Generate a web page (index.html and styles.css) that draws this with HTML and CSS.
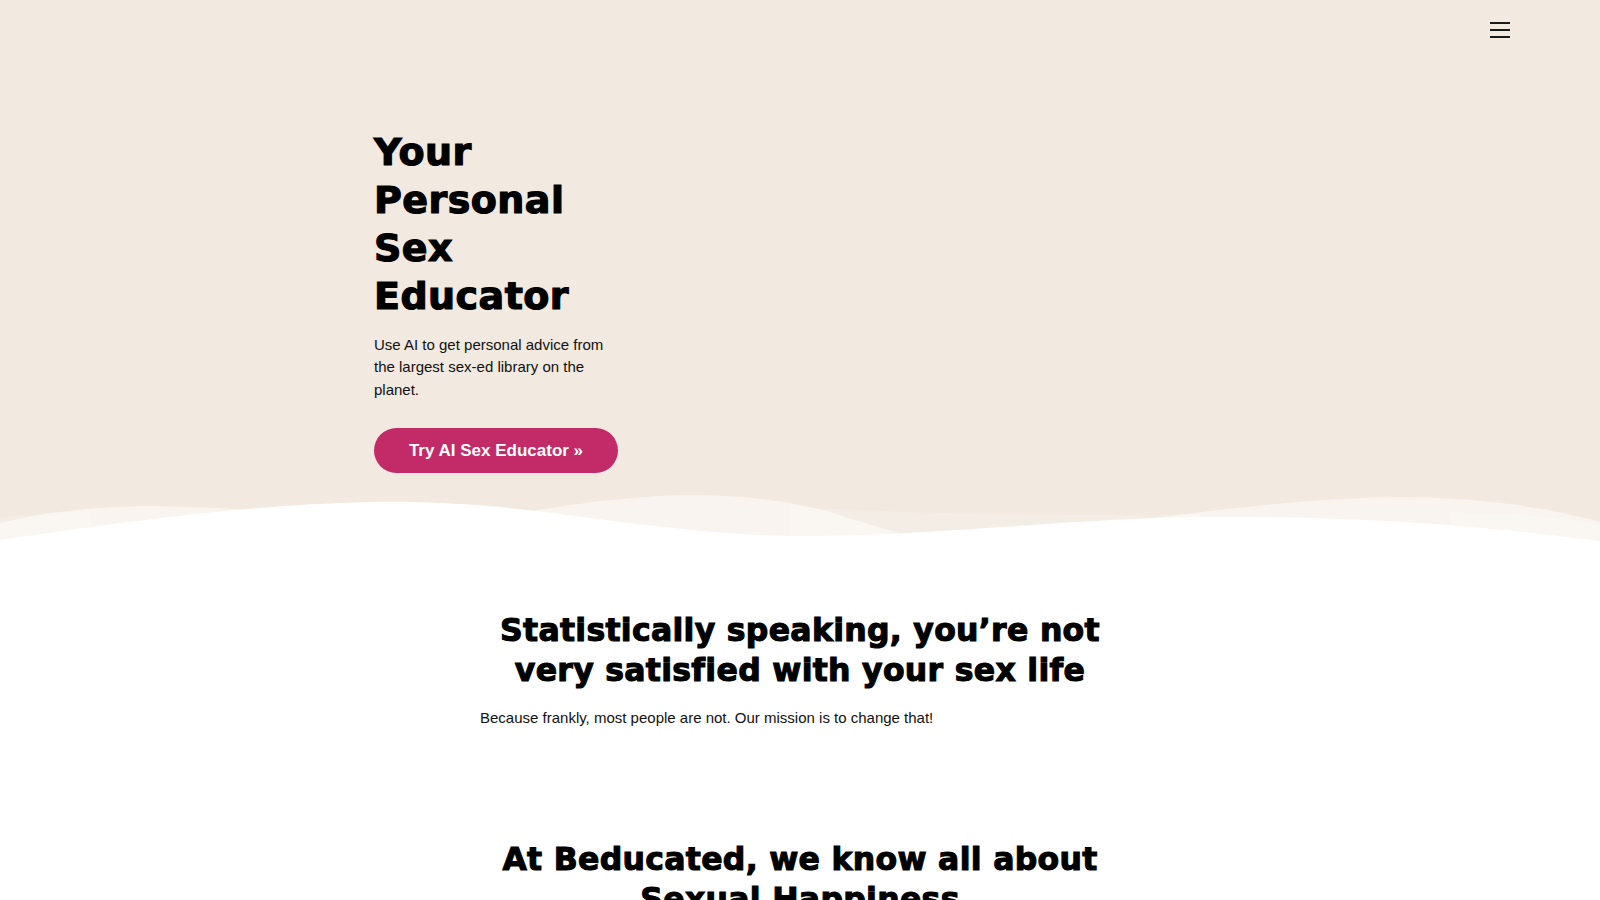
FILE: index.html
```html
<!DOCTYPE html>
<html lang="en">
<head>
<meta charset="utf-8">
<title>Beducated – Your Personal Sex Educator</title>
<link rel="stylesheet" href="styles.css">
</head>
<body>
<section class="hero">
  <header class="topbar">
    <button class="menu" aria-label="Menu">
      <span class="menu-line"></span>
      <span class="menu-line"></span>
      <span class="menu-line"></span>
    </button>
  </header>
  <div class="hero-content">
    <h1 class="hero-title">Your Personal Sex Educator</h1>
    <p class="hero-text">Use AI to get personal advice from the largest sex-ed library on the planet.</p>
    <a class="btn" href="#">Try AI Sex Educator »</a>
  </div>
  <svg class="hero-wave" viewBox="0 485 1600 61" preserveAspectRatio="none" aria-hidden="true">
    <path class="wave-soft" d="M0,523 C40,513 90,507 140,506 C190,506 240,509 280,512 C330,515 380,516 420,520 L420,546 L0,546 Z"/>
    <path class="wave-faint" d="M0,517 C30,514 60,512 90,511 L90,546 L0,546 Z"/>
    <path class="wave-soft" d="M480,520 C560,505 640,494 700,495 C760,496 800,504 830,512 C850,518 870,525 900,533 L900,546 L480,546 Z"/>
    <path class="wave-faint" d="M790,506 C900,514 1050,516 1200,514 L1200,546 L790,546 Z"/>
    <path class="wave-soft" d="M1100,525 C1200,512 1300,498 1400,497 C1480,497 1550,508 1600,522 L1600,546 L1100,546 Z"/>
    <path class="wave-faint" d="M1450,512 C1520,514 1570,518 1600,524 L1600,546 L1450,546 Z"/>
    <path class="wave-solid" d="M0,540 C110,524 240,505 370,502 C440,501 500,506 560,514 C650,526 730,536 800,536 C930,536 1080,518 1200,517 C1380,516 1500,528 1600,541 L1600,546 L0,546 Z"/>
  </svg>
</section>

<section class="intro">
  <h2 class="section-title">Statistically speaking, you’re not very satisfied with your sex life</h2>
  <p class="section-text">Because frankly, most people are not. Our mission is to change that!</p>
</section>

<section class="about">
  <h2 class="section-title">At Beducated, we know all about Sexual Happiness</h2>
</section>
</body>
</html>
```

FILE: styles.css
```css
* {
  box-sizing: border-box;
}

html, body {
  margin: 0;
  padding: 0;
  background: #ffffff;
}

body {
  font-family: "Liberation Sans", Arial, Helvetica, sans-serif;
  color: #111111;
  overflow: hidden;
}

.hero {
  position: relative;
  height: 546px;
  background: #f2e9e0;
}

.topbar {
  display: flex;
  justify-content: flex-end;
  align-items: center;
  height: 60px;
  padding-right: 90px;
}

.menu {
  display: flex;
  flex-direction: column;
  justify-content: space-between;
  width: 20px;
  height: 16px;
  padding: 0;
  border: 0;
  background: transparent;
  cursor: pointer;
}

.menu-line {
  display: block;
  height: 2px;
  width: 100%;
  background: #1a1a1a;
}

.hero-content {
  display: flex;
  flex-direction: column;
  align-items: flex-start;
  width: 245px;
  margin-left: 374px;
  margin-top: 68px;
}

.hero-title {
  margin: 0;
  font-family: "DejaVu Sans", "Liberation Sans", sans-serif;
  font-weight: 700;
  font-size: 38px;
  line-height: 48px;
  letter-spacing: 0.45px;
  color: #000000;
  -webkit-text-stroke: 1.2px #000000;
}

.hero-text {
  margin: 13.5px 0 0;
  font-size: 15px;
  line-height: 22.5px;
  color: #111111;
}

.btn {
  display: flex;
  align-items: center;
  justify-content: center;
  width: 244px;
  height: 45px;
  margin-top: 27px;
  border-radius: 23px;
  background: #c22a68;
  color: #ffffff;
  font-weight: 700;
  font-size: 17px;
  text-decoration: none;
}

.hero-wave {
  position: absolute;
  left: 0;
  bottom: 0;
  width: 100%;
  height: 61px;
  display: block;
}

.wave-soft {
  fill: #ffffff;
  opacity: 0.5;
}

.wave-faint {
  fill: #ffffff;
  opacity: 0.18;
}

.wave-solid {
  fill: #ffffff;
}

.intro {
  width: 640px;
  margin: 0 auto;
  padding-top: 64px;
}

.section-title {
  margin: 0;
  font-family: "DejaVu Sans", "Liberation Sans", sans-serif;
  font-weight: 700;
  font-size: 31.5px;
  line-height: 40px;
  letter-spacing: 0.3px;
  text-align: center;
  color: #000000;
  -webkit-text-stroke: 1.1px #000000;
}

.section-text {
  margin: 17px 0 0;
  font-size: 15px;
  line-height: 22.5px;
  color: #111111;
}

.about {
  width: 640px;
  margin: 0 auto;
  padding-top: 109px;
}
```
